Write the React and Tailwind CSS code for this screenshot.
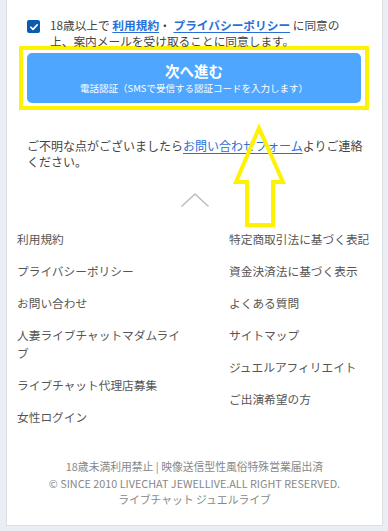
import React from "react";

const leftLinks = [
  "利用規約",
  "プライバシーポリシー",
  "お問い合わせ",
  "人妻ライブチャットマダムライブ",
  "ライブチャット代理店募集",
  "女性ログイン",
];

const rightLinks = [
  "特定商取引法に基づく表記",
  "資金決済法に基づく表示",
  "よくある質問",
  "サイトマップ",
  "ジュエルアフィリエイト",
  "ご出演希望の方",
];

export default function App() {
  return (
    <div
      className="h-[531px] w-[388px] bg-[#e9edf4] pl-[6px] pr-[5px]"
      style={{ fontFamily: '"Noto Sans CJK JP", "Noto Sans", sans-serif' }}
    >
      <div className="relative h-[526px] border border-t-0 border-[#dcdfe3] bg-white">
        {/* consent */}
        <div className="flex items-start gap-[10px] pl-[20px] pr-[24px] pt-[17px]">
          <div className="mt-[3px] flex h-[13px] w-[13px] shrink-0 items-center justify-center rounded-[2px] bg-[#0b5cad]">
            <svg viewBox="0 0 12 12" className="h-[10px] w-[10px]">
              <path d="M2.2 6.3 L4.8 8.8 L9.8 3.4" fill="none" stroke="#fff" strokeWidth="2" strokeLinecap="round" strokeLinejoin="round" />
            </svg>
          </div>
          <p className="text-[11.7px] leading-[16px] text-[#444]">
            18歳以上で <span className="font-bold text-[#2a6fd8] underline underline-offset-2">利用規約</span>・{" "}
            <span className="font-bold text-[#2a6fd8] underline underline-offset-2">プライバシーポリシー</span> に同意の上、案内メールを受け取ることに同意します。
          </p>
        </div>

        {/* button with highlight frame */}
        <div className="-mt-[3px] ml-[12px] mr-[13px] border-[4px] border-[#fff200] px-[4px] py-[3px]">
          <button className="flex h-[50px] w-full flex-col items-center justify-center rounded-[5px] bg-[#4fa6ff] text-white">
            <span className="text-[14.5px] font-bold leading-[20px]">次へ進む</span>
            <span className="text-[9.5px] leading-[14px]">電話認証（SMSで受信する認証コードを入力します）</span>
          </button>
        </div>

        {/* contact */}
        <p className="mt-[28px] pl-[20px] pr-[8px] text-[12px] leading-[16px] text-[#444]">
          ご不明な点がございましたら<span className="text-[#2a6fd8] underline underline-offset-2">お問い合わせフォーム</span>よりご連絡ください。
        </p>

        {/* chevron */}
        <div className="mt-[22px] flex justify-center">
          <svg viewBox="0 0 30 16" className="h-[16px] w-[30px]">
            <path d="M1.5 14.5 L15 2 L28.5 14.5" fill="none" stroke="#bdbdbd" strokeWidth="1.6" />
          </svg>
        </div>

        {/* footer links */}
        <div className="mt-[22px] grid grid-cols-[212px_1fr] pl-[10px] text-[11.7px] leading-[18px] text-[#555]">
          <ul className="flex flex-col gap-[14px] pr-[44px]">
            {leftLinks.map((t) => (
              <li key={t}>{t}</li>
            ))}
          </ul>
          <ul className="flex flex-col gap-[14px]">
            {rightLinks.map((t) => (
              <li key={t} className="whitespace-nowrap">{t}</li>
            ))}
          </ul>
        </div>

        {/* copyright */}
        <div className="mt-[32px] text-center text-[10.8px] leading-[16.5px] text-[#888]" style={{ fontFamily: '"Noto Sans CJK JP", "Open Sans", sans-serif' }}>
          <p>18歳未満利用禁止 | 映像送信型性風俗特殊営業届出済</p>
          <p>© SINCE 2010 LIVECHAT JEWELLIVE.ALL RIGHT RESERVED.</p>
          <p>ライブチャット ジュエルライブ</p>
        </div>

        {/* annotation arrow */}
        <svg className="pointer-events-none absolute left-[224px] top-[124px] h-[106px] w-[58px]" viewBox="0 0 58 106">
          <path
            d="M28 4 L52 58 L42 58 L42 101 L16 101 L16 58 L5 58 Z"
            fill="none"
            stroke="#fff200"
            strokeWidth="4"
            strokeLinejoin="miter"
          />
        </svg>
      </div>
    </div>
  );
}
